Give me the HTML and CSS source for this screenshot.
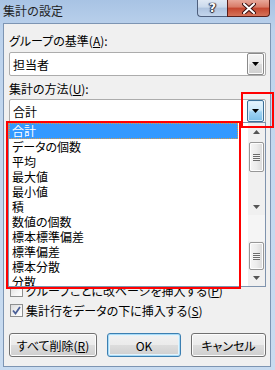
FILE: index.html
```html
<!DOCTYPE html>
<html lang="ja">
<head>
    <meta charset="UTF-8">
    <meta name="viewport" content="width=device-width, initial-scale=1.0">
    <title>集計の設定</title>
    <link rel="stylesheet" href="styles.css">
</head>
<body>
    <div class="window">
        <div class="titlebar">
            <span class="title">集計の設定</span>
            <div class="caption-buttons">
                <span class="cap-btn help">?</span>
                <span class="cap-btn close">
                    <svg width="14" height="11" viewBox="0 0 14 11">
                        <path d="M2 1 L12 10 M12 1 L2 10" stroke="#3a1010" stroke-width="4" stroke-linecap="round"/>
                        <path d="M2 1 L12 10 M12 1 L2 10" stroke="#ffffff" stroke-width="2" stroke-linecap="round"/>
                    </svg>
                </span>
            </div>
        </div>

        <div class="client">
            <div class="label">グループの基準(<u>A</u>):</div>
            <div class="combo combo-first">
                <span class="combo-text">担当者</span>
                <span class="drop-btn">
                    <svg width="7" height="4" viewBox="0 0 7 4"><path d="M0 0 H7 L3.5 4 Z" fill="#000"/></svg>
                </span>
            </div>

            <div class="label label-method">集計の方法(<u>U</u>):</div>
            <div class="combo combo-second">
                <span class="combo-text">合計</span>
                <span class="drop-btn hover">
                    <svg width="7" height="4" viewBox="0 0 7 4"><path d="M0 0 H7 L3.5 4 Z" fill="#000"/></svg>
                </span>
            </div>

            <div class="field-area"></div>

            <div class="check-row">
                <span class="checkbox"></span>
                <span>グループごとに改ページを挿入する(<u>P</u>)</span>
            </div>
            <div class="check-row second">
                <span class="checkbox">
                    <svg width="9" height="9" viewBox="0 0 9 9"><path d="M1 4.5 L3.5 7.5 L8 1" fill="none" stroke="#4a5f97" stroke-width="1.8"/></svg>
                </span>
                <span>集計行をデータの下に挿入する(<u>S</u>)</span>
            </div>

            <div class="buttons">
                <button class="btn btn-clear">すべて削除(<u>R</u>)</button>
                <button class="btn btn-ok">OK</button>
                <button class="btn btn-cancel">キャンセル</button>
            </div>

            <!-- lista desplegada encima del resto -->
            <div class="dropdown">
                <ul class="items">
                    <li class="selected">合計</li>
                    <li>データの個数</li>
                    <li>平均</li>
                    <li>最大値</li>
                    <li>最小値</li>
                    <li>積</li>
                    <li>数値の個数</li>
                    <li>標本標準偏差</li>
                    <li>標準偏差</li>
                    <li>標本分散</li>
                    <li>分散</li>
                </ul>
                <div class="scrollbar">
                    <div class="sb-btn up">
                        <svg width="7" height="4" viewBox="0 0 7 4"><path d="M0 4 H7 L3.5 0 Z" fill="#555"/></svg>
                    </div>
                    <div class="thumb"><span class="grip"></span></div>
                    <div class="track"></div>
                    <div class="sb-btn down">
                        <svg width="7" height="4" viewBox="0 0 7 4"><path d="M0 0 H7 L3.5 4 Z" fill="#555"/></svg>
                    </div>
                    <div class="track light"></div>
                    <div class="thumb thumb-low"><span class="grip"></span></div>
                    <div class="sb-btn down last">
                        <svg width="7" height="4" viewBox="0 0 7 4"><path d="M0 0 H7 L3.5 4 Z" fill="#555"/></svg>
                    </div>
                </div>
            </div>

            <div class="mark mark-list"></div>
            <div class="mark mark-btn"></div>
        </div>
    </div>
</body>
</html>
```

FILE: styles.css
```css
* {
    margin: 0;
    padding: 0;
    box-sizing: border-box;
}

body {
    font-family: "Noto Sans CJK JP", "Noto Sans", sans-serif;
    font-size: 12px;
    font-feature-settings: "palt";
    color: #000;
    background: #c0d5ee;
}

.window {
    width: 275px;
    height: 370px;
    overflow: hidden;
    background: linear-gradient(180deg, #a8c3e4 0%, #bcd2ec 8%, #c3d8ef 40%, #c8dbf0 100%);
    display: flex;
    flex-direction: column;
}

.titlebar {
    height: 23px;
    display: flex;
    align-items: flex-start;
}

.title {
    padding: 3px 0 0 3px;
    line-height: 15px;
    font-size: 12px;
    font-feature-settings: normal;
    color: #1e1e1e;
}

.caption-buttons {
    margin-left: auto;
    margin-right: 5px;
    display: flex;
}

.cap-btn {
    height: 17px;
    display: flex;
    align-items: center;
    justify-content: center;
    border: 1px solid #4e5f7d;
    border-top: none;
}

.help {
    width: 30px;
    border-right: none;
    border-radius: 0 0 0 4px;
    background: linear-gradient(180deg, #dfe8f4 0%, #cad9ec 45%, #aec3df 50%, #c3d5ec 100%);
    color: #fff;
    font-family: "DejaVu Sans", sans-serif;
    font-weight: bold;
    font-size: 12px;
    text-shadow: 0 0 1px #223, 1px 0 1px #223, -1px 0 1px #223, 0 1px 1px #223;
}

.close {
    width: 43px;
    border-color: #5a1f1a;
    border-radius: 0 0 4px 0;
    background: linear-gradient(180deg, #e8a799 0%, #d87a66 45%, #c4452e 50%, #d5735a 100%);
}

.client {
    position: relative;
    height: 344px;
    margin: 0 4px 0 3px;
    border: 1px solid #7d95b3;
    background: #f0f0f0;
    padding: 9px 4px 0 5px;
}

.label {
    height: 15px;
    line-height: 15px;
}

.label-method {
    margin-top: 5px;
}

.combo {
    height: 24px;
    border: 1px solid #acacac;
    border-radius: 2px;
    background: #fff;
    display: flex;
    align-items: center;
    padding: 0 1px 0 3px;
}

.combo-first {
    margin-top: 4px;
}

.combo-second {
    margin-top: 3px;
}

.combo-text {
    line-height: 15px;
}

.drop-btn {
    margin-left: auto;
    width: 17px;
    height: 22px;
    border: 1px solid #8a8a8a;
    border-radius: 2px;
    background: linear-gradient(180deg, #f4f4f4 0%, #ebebeb 50%, #dcdcdc 50%, #d0d0d0 100%);
    box-shadow: inset 0 0 0 1px #fbfbfb;
    display: flex;
    align-items: center;
    justify-content: center;
}

.drop-btn.hover {
    border-color: #3c6f96;
    background: linear-gradient(180deg, #e6f4fc 0%, #cdeafa 45%, #9fd3f3 55%, #7cbfe8 100%);
    box-shadow: inset 0 0 0 1px #d8eefb;
}

.field-area {
    height: 160px;
}

.check-row {
    height: 15px;
    line-height: 15px;
    display: flex;
    align-items: center;
}

.check-row.second {
    margin-top: 5px;
}

.checkbox {
    width: 13px;
    height: 13px;
    margin: 0 3px 0 1px;
    border: 1px solid #8e8f8f;
    background: linear-gradient(135deg, #dcdcdc 0%, #f4f4f4 60%, #ffffff 100%);
    display: flex;
    align-items: center;
    justify-content: center;
}

.buttons {
    margin-top: 15px;
    display: flex;
    gap: 10px;
}

.btn {
    height: 24px;
    font-family: inherit;
    font-size: 12px;
    font-feature-settings: "palt";
    color: #000;
    border: 1px solid #707070;
    border-radius: 3px;
    background: linear-gradient(180deg, #f2f2f2 0%, #ebebeb 50%, #dddddd 50%, #cfcfcf 100%);
    box-shadow: inset 0 0 0 1px #fcfcfc;
}

.btn-clear {
    width: 88px;
}

.btn-ok {
    width: 74px;
    border-color: #3c7fb1;
    box-shadow: inset 0 0 0 1px #a8dbf7, inset 0 0 0 2px #e4f3fb;
}

.btn-cancel {
    width: 75px;
}

/* lista desplegada */
.dropdown {
    position: absolute;
    left: 4px;
    top: 98px;
    width: 258px;
    height: 165px;
    border: 1px solid #7f93ad;
    background: #fff;
    display: flex;
    overflow: hidden;
}

.items {
    list-style: none;
    width: 229px;
}

.items li {
    height: 15px;
    line-height: 15px;
    padding-left: 3px;
    white-space: nowrap;
}

.items li.selected {
    height: 16px;
    background: #3399ff;
    color: #fff;
    padding-left: 2px;
    border: 1px dotted #d89a4a;
    line-height: 14px;
}

.scrollbar {
    margin-left: auto;
    width: 17px;
    background: #f0f0f0;
    display: flex;
    flex-direction: column;
}

.sb-btn {
    height: 18px;
    display: flex;
    align-items: center;
    justify-content: center;
}

.sb-btn.down {
    height: 17px;
}

.sb-btn.last {
    height: 15px;
}

.thumb {
    height: 30px;
    margin: 1px 1px 0;
    border: 1px solid #979797;
    border-radius: 2px;
    background: linear-gradient(90deg, #f5f5f5 0%, #ececec 50%, #d9d9d9 100%);
    box-shadow: inset 0 0 0 1px #fdfdfd;
    display: flex;
    align-items: center;
    justify-content: center;
}

.thumb-low {
    height: 28px;
}

.grip {
    width: 7px;
    height: 7px;
    background: repeating-linear-gradient(180deg, #6b6b6b 0px, #6b6b6b 1px, #f4f4f4 1px, #f4f4f4 2px);
}

.track {
    height: 26px;
}

.track.light {
    height: 26px;
    background: #f5f5f5;
}

/* marcos rojos de anotación */
.mark {
    position: absolute;
    border: 2px solid #ff0000;
}

.mark-list {
    left: 2px;
    top: 97px;
    width: 235px;
    height: 168px;
}

.mark-btn {
    left: 237px;
    top: 68px;
    width: 33px;
    height: 36px;
}
```
